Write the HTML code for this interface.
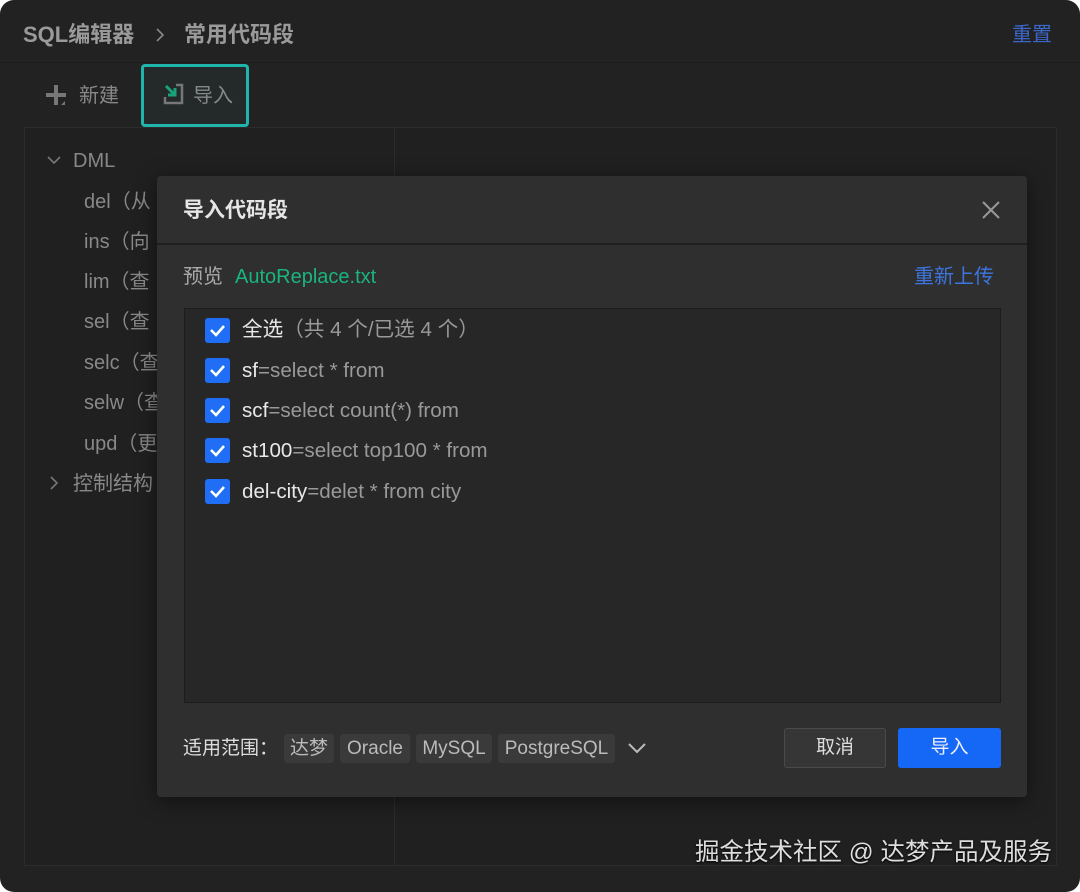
<!DOCTYPE html>
<html><head><meta charset="utf-8"><style>
*{margin:0;padding:0;box-sizing:border-box}
html,body{width:1080px;height:892px;background:#fff;overflow:hidden}
body{font-family:"Liberation Sans","Noto Sans CJK SC",sans-serif}
.app{position:absolute;left:0;top:0;width:1080px;height:892px;background:#222222;border-radius:14px;overflow:hidden}
.abs{position:absolute;white-space:nowrap;line-height:24px}
.panel{position:absolute;left:24px;top:127px;width:1033px;height:739px;border:1px solid #2c2c2c;background:#202020}
.dlg{position:absolute;left:157px;top:176px;width:870px;height:621px;background:#2f2f2f;border-radius:4px;box-shadow:0 4px 20px rgba(0,0,0,.5)}
.cb{position:absolute;left:20px;width:25px;height:25px;background:#1f6ef5;border-radius:3px}
.cb svg{position:absolute;left:4px;top:5px}
.row{position:absolute;left:57px;font-size:20.6px;line-height:24px;color:#999;white-space:nowrap}
.row b{font-weight:normal;color:#e8e8e8}
.tag{position:absolute;top:558px;height:29px;background:#3a3a3a;border-radius:3px;color:#bbb;font-size:19px;line-height:29px;text-align:center}
.t{font-size:20px;color:#888}
</style></head><body>
<div class="app">
<div class="abs" style="left:23px;top:23px;font-size:22px;font-weight:bold;color:#9a9a9a">SQL编辑器</div>
<svg class="abs" style="left:154px;top:27px" width="12" height="16"><path d="M3 2l6 6-6 6" fill="none" stroke="#888" stroke-width="1.6"/></svg>
<div class="abs" style="left:184px;top:23px;font-size:22px;font-weight:bold;color:#9a9a9a">常用代码段</div>
<div class="abs" style="left:1012px;top:23px;font-size:20px;color:#3c67c8">重置</div>
<div style="position:absolute;left:0;top:62px;width:1080px;height:1px;background:#1c1c1c"></div>
<svg class="abs" style="left:46px;top:84px" width="24" height="24"><path d="M10 1v20M0 11h20" stroke="#777" stroke-width="4"/><path d="M19 17v4h-4z" fill="#777"/></svg>
<div class="abs t" style="left:79px;top:84px">新建</div>
<div style="position:absolute;left:141px;top:64px;width:108px;height:63px;border:3px solid #1fb5ac;border-radius:4px;background:#232a29"></div>
<svg class="abs" style="left:162px;top:83px" width="24" height="22" viewBox="0 0 24 22"><path d="M3 14v6h17V2h-6" fill="none" stroke="#777" stroke-width="2.5"/><path d="M4 3l9 9M13 5v7H6" fill="none" stroke="#1aa37a" stroke-width="3"/></svg>
<div class="abs t" style="left:193px;top:84px">导入</div>
<div class="panel"></div>
<div style="position:absolute;left:394px;top:128px;width:1px;height:737px;background:#2c2c2c"></div>
<svg class="abs" style="left:46px;top:154px" width="16" height="12"><path d="M2 3l6 6 6-6" fill="none" stroke="#777" stroke-width="1.6"/></svg>
<div class="abs t" style="left:73px;top:149px">DML</div>
<div class="abs t" style="left:84px;top:190px">del（从</div>
<div class="abs t" style="left:84px;top:230px">ins（向</div>
<div class="abs t" style="left:84px;top:270px">lim（查</div>
<div class="abs t" style="left:84px;top:310px">sel（查</div>
<div class="abs t" style="left:84px;top:351px">selc（查</div>
<div class="abs t" style="left:84px;top:391px">selw（查</div>
<div class="abs t" style="left:84px;top:432px">upd（更</div>
<svg class="abs" style="left:48px;top:475px" width="12" height="16"><path d="M3 2l6 6-6 6" fill="none" stroke="#777" stroke-width="1.6"/></svg>
<div class="abs t" style="left:73px;top:472px">控制结构</div>
<div class="abs" style="left:695px;top:839px;font-size:24.5px;line-height:28px;color:#ddd;text-shadow:0 1px 2px #000">掘金技术社区 @ 达梦产品及服务</div>

<div class="dlg">
<div class="abs" style="left:26px;top:23px;font-size:21px;font-weight:bold;color:#e6e6e6">导入代码段</div>
<svg class="abs" style="left:824px;top:24px" width="20" height="20"><path d="M2 2l16 16M18 2L2 18" stroke="#999" stroke-width="2"/></svg>
<div style="position:absolute;left:0;top:67px;width:870px;height:2px;background:#1f1f1f"></div>
<div class="abs" style="left:26px;top:89px;font-size:20px;color:#aaa">预览</div>
<div class="abs" style="left:78px;top:89px;font-size:20px;color:#1ab57e">AutoReplace.txt</div>
<div class="abs" style="left:757px;top:89px;font-size:20px;color:#3c75e0">重新上传</div>
<div style="position:absolute;left:27px;top:132px;width:817px;height:395px;background:#272727;border:1px solid #1c1c1c">
<div class="cb" style="top:9px"><svg width="17" height="15"><path d="M2 7l5 5 8-9" fill="none" stroke="#fff" stroke-width="2.6"/></svg></div>
<div class="row" style="top:9px"><b>全选</b>（共 4 个/已选 4 个）</div>
<div class="cb" style="top:49px"><svg width="17" height="15"><path d="M2 7l5 5 8-9" fill="none" stroke="#fff" stroke-width="2.6"/></svg></div>
<div class="row" style="top:50px"><b>sf</b>=select * from</div>
<div class="cb" style="top:89px"><svg width="17" height="15"><path d="M2 7l5 5 8-9" fill="none" stroke="#fff" stroke-width="2.6"/></svg></div>
<div class="row" style="top:90px"><b>scf</b>=select count(*) from</div>
<div class="cb" style="top:129px"><svg width="17" height="15"><path d="M2 7l5 5 8-9" fill="none" stroke="#fff" stroke-width="2.6"/></svg></div>
<div class="row" style="top:130px"><b>st100</b>=select top100 * from</div>
<div class="cb" style="top:170px"><svg width="17" height="15"><path d="M2 7l5 5 8-9" fill="none" stroke="#fff" stroke-width="2.6"/></svg></div>
<div class="row" style="top:171px"><b>del-city</b>=delet * from city</div>
</div>
<div class="abs" style="left:26px;top:561px;font-size:19px;color:#ddd">适用范围：</div>
<div class="tag" style="left:127px;width:50px">达梦</div>
<div class="tag" style="left:183px;width:70px">Oracle</div>
<div class="tag" style="left:259px;width:76px">MySQL</div>
<div class="tag" style="left:341px;width:117px">PostgreSQL</div>
<svg class="abs" style="left:470px;top:565px" width="20" height="14"><path d="M2 3l8 8 8-8" fill="none" stroke="#bbb" stroke-width="2"/></svg>
<div style="position:absolute;left:627px;top:552px;width:102px;height:40px;border:1px solid #4a4a4a;background:#363636;border-radius:3px;color:#ddd;font-size:19px;line-height:38px;text-align:center">取消</div>
<div style="position:absolute;left:741px;top:552px;width:103px;height:40px;background:#1567f5;border-radius:3px;color:#eef;font-size:19px;line-height:40px;text-align:center">导入</div>
</div>
</div>
</body></html>
